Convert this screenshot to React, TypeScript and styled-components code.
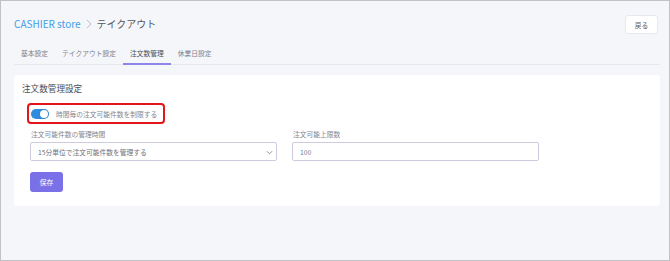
import React, { useState } from "react";
import styled, { createGlobalStyle } from "styled-components";

const GlobalStyle = createGlobalStyle`
  html, body {
    margin: 0;
    padding: 0;
  }
  body {
    font-family: "Noto Sans CJK JP", "Noto Sans", sans-serif;
    background: #ffffff;
  }
  * {
    box-sizing: border-box;
  }
`;

const tabs = ["基本設定", "テイクアウト設定", "注文数管理", "休業日設定"];

export default function App() {
  const [active, setActive] = useState(2);
  const [limited, setLimited] = useState(true);
  const [limit, setLimit] = useState("100");

  return (
    <>
      <GlobalStyle />
      <Page>
        <Header>
          <Breadcrumb>
            <StoreLink>CASHIER store</StoreLink>
            <Crumb viewBox="0 0 6 10" width="6" height="10">
              <path d="M1 1 L5 5 L1 9" fill="none" stroke="#b5b7c0" strokeWidth="0.9" />
            </Crumb>
            <Current>テイクアウト</Current>
          </Breadcrumb>
          <BackButton>戻る</BackButton>
        </Header>

        <TabBar>
          {tabs.map((t, i) => (
            <Tab key={t} $active={i === active} onClick={() => setActive(i)}>
              {t}
            </Tab>
          ))}
        </TabBar>

        <Card>
          <CardTitle>注文数管理設定</CardTitle>
          <Form>
            <ToggleRow onClick={() => setLimited(!limited)}>
              <Switch $on={limited}>
                <Knob $on={limited} />
              </Switch>
              <ToggleLabel>時間毎の注文可能件数を制限する</ToggleLabel>
            </ToggleRow>

            <Fields>
              <Field>
                <FieldLabel>注文可能件数の管理時間</FieldLabel>
                <SelectBox>
                  <SelectText>15分単位で注文可能件数を管理する</SelectText>
                  <Chevron viewBox="0 0 8 5" width="7" height="5">
                    <path d="M1 1 L4 4 L7 1" fill="none" stroke="#777" strokeWidth="0.9" />
                  </Chevron>
                </SelectBox>
              </Field>
              <Field>
                <FieldLabel>注文可能上限数</FieldLabel>
                <TextInput value={limit} onChange={(e) => setLimit(e.target.value)} />
              </Field>
            </Fields>

            <SaveButton>保存</SaveButton>
          </Form>
        </Card>
      </Page>
    </>
  );
}

const Page = styled.div`
  width: 670px;
  height: 261px;
  border: 1px solid #c2c2c4;
  background: #f5f6fa;
  padding: 13px 9px 0 13px;
`;

const Header = styled.div`
  display: flex;
  align-items: center;
  justify-content: space-between;
  height: 21px;
  padding-right: 2px;
`;

const Breadcrumb = styled.div`
  display: flex;
  align-items: center;
  gap: 5px;
  font-size: 10px;
  line-height: 14px;
  margin-top: -2px;
`;

const StoreLink = styled.span`
  color: #3f9de6;
`;

const Crumb = styled.svg`
  display: block;
`;

const Current = styled.span`
  color: #55575e;
`;

const BackButton = styled.button`
  width: 33px;
  height: 19px;
  padding: 0;
  border: 1px solid #e7e9f1;
  border-radius: 3px;
  background: #ffffff;
  color: #5a5c63;
  font-family: inherit;
  font-size: 6.75px;
  cursor: pointer;
`;

const TabBar = styled.div`
  display: flex;
  margin-top: 7px;
  border-bottom: 1px solid #e7e9f1;
`;

const Tab = styled.div<{ $active: boolean }>`
  padding: 0 7px;
  height: 23px;
  line-height: 22px;
  font-size: 6.75px;
  color: ${(p) => (p.$active ? "#4d4f56" : "#80828a")};
  border-bottom: 2px solid ${(p) => (p.$active ? "#8d85e8" : "transparent")};
  margin-bottom: -1px;
  cursor: pointer;
`;

const Card = styled.div`
  margin-top: 10px;
  background: #ffffff;
  border-radius: 3px;
  padding: 7px 8px 13px 8px;
  height: 131px;
`;

const CardTitle = styled.div`
  font-size: 8.6px;
  line-height: 12px;
  color: #4a4c53;
`;

const Form = styled.div`
  padding-left: 5px;
  margin-top: 9px;
`;

const ToggleRow = styled.div`
  display: flex;
  width: fit-content;
  align-items: center;
  gap: 7px;
  height: 21px;
  padding: 0 6px 0 2px;
  border: 2px solid #e4141b;
  border-radius: 4px;
  cursor: pointer;
`;

const Switch = styled.div<{ $on: boolean }>`
  position: relative;
  width: 18px;
  height: 10px;
  border-radius: 5px;
  background: ${(p) => (p.$on ? "#2d8be0" : "#c9cbd3")};
`;

const Knob = styled.div<{ $on: boolean }>`
  position: absolute;
  top: 1px;
  left: ${(p) => (p.$on ? "9px" : "1px")};
  width: 8px;
  height: 8px;
  border-radius: 50%;
  background: #ffffff;
  box-shadow: 0 0 1px rgba(0, 0, 0, 0.3);
`;

const ToggleLabel = styled.span`
  font-size: 6.75px;
  color: #85878f;
`;

const Fields = styled.div`
  display: flex;
  gap: 15px;
  margin-top: 5px;
  padding-left: 3px;
`;

const Field = styled.div`
  display: flex;
  flex-direction: column;
  width: 247px;
`;

const FieldLabel = styled.div`
  font-size: 6.75px;
  line-height: 11px;
  color: #85878f;
  padding-left: 1px;
  margin-bottom: 2px;
`;

const SelectBox = styled.div`
  position: relative;
  display: flex;
  align-items: center;
  height: 19px;
  padding: 0 7px;
  border: 1px solid #cdcbdf;
  border-radius: 2px;
  background: #ffffff;
`;

const SelectText = styled.span`
  font-size: 6.75px;
  color: #6f7179;
`;

const Chevron = styled.svg`
  position: absolute;
  right: 3px;
  top: 7px;
`;

const TextInput = styled.input`
  height: 19px;
  padding: 0 7px;
  border: 1px solid #cdcbdf;
  border-radius: 2px;
  font-family: inherit;
  font-size: 6.75px;
  color: #7b7d85;
  outline: none;
`;

const SaveButton = styled.button`
  display: block;
  margin: 11px 0 0 3px;
  width: 33px;
  height: 20px;
  padding: 0;
  border: none;
  border-radius: 3px;
  background: #7a71e8;
  color: #ffffff;
  font-family: inherit;
  font-size: 6.75px;
  cursor: pointer;
`;
